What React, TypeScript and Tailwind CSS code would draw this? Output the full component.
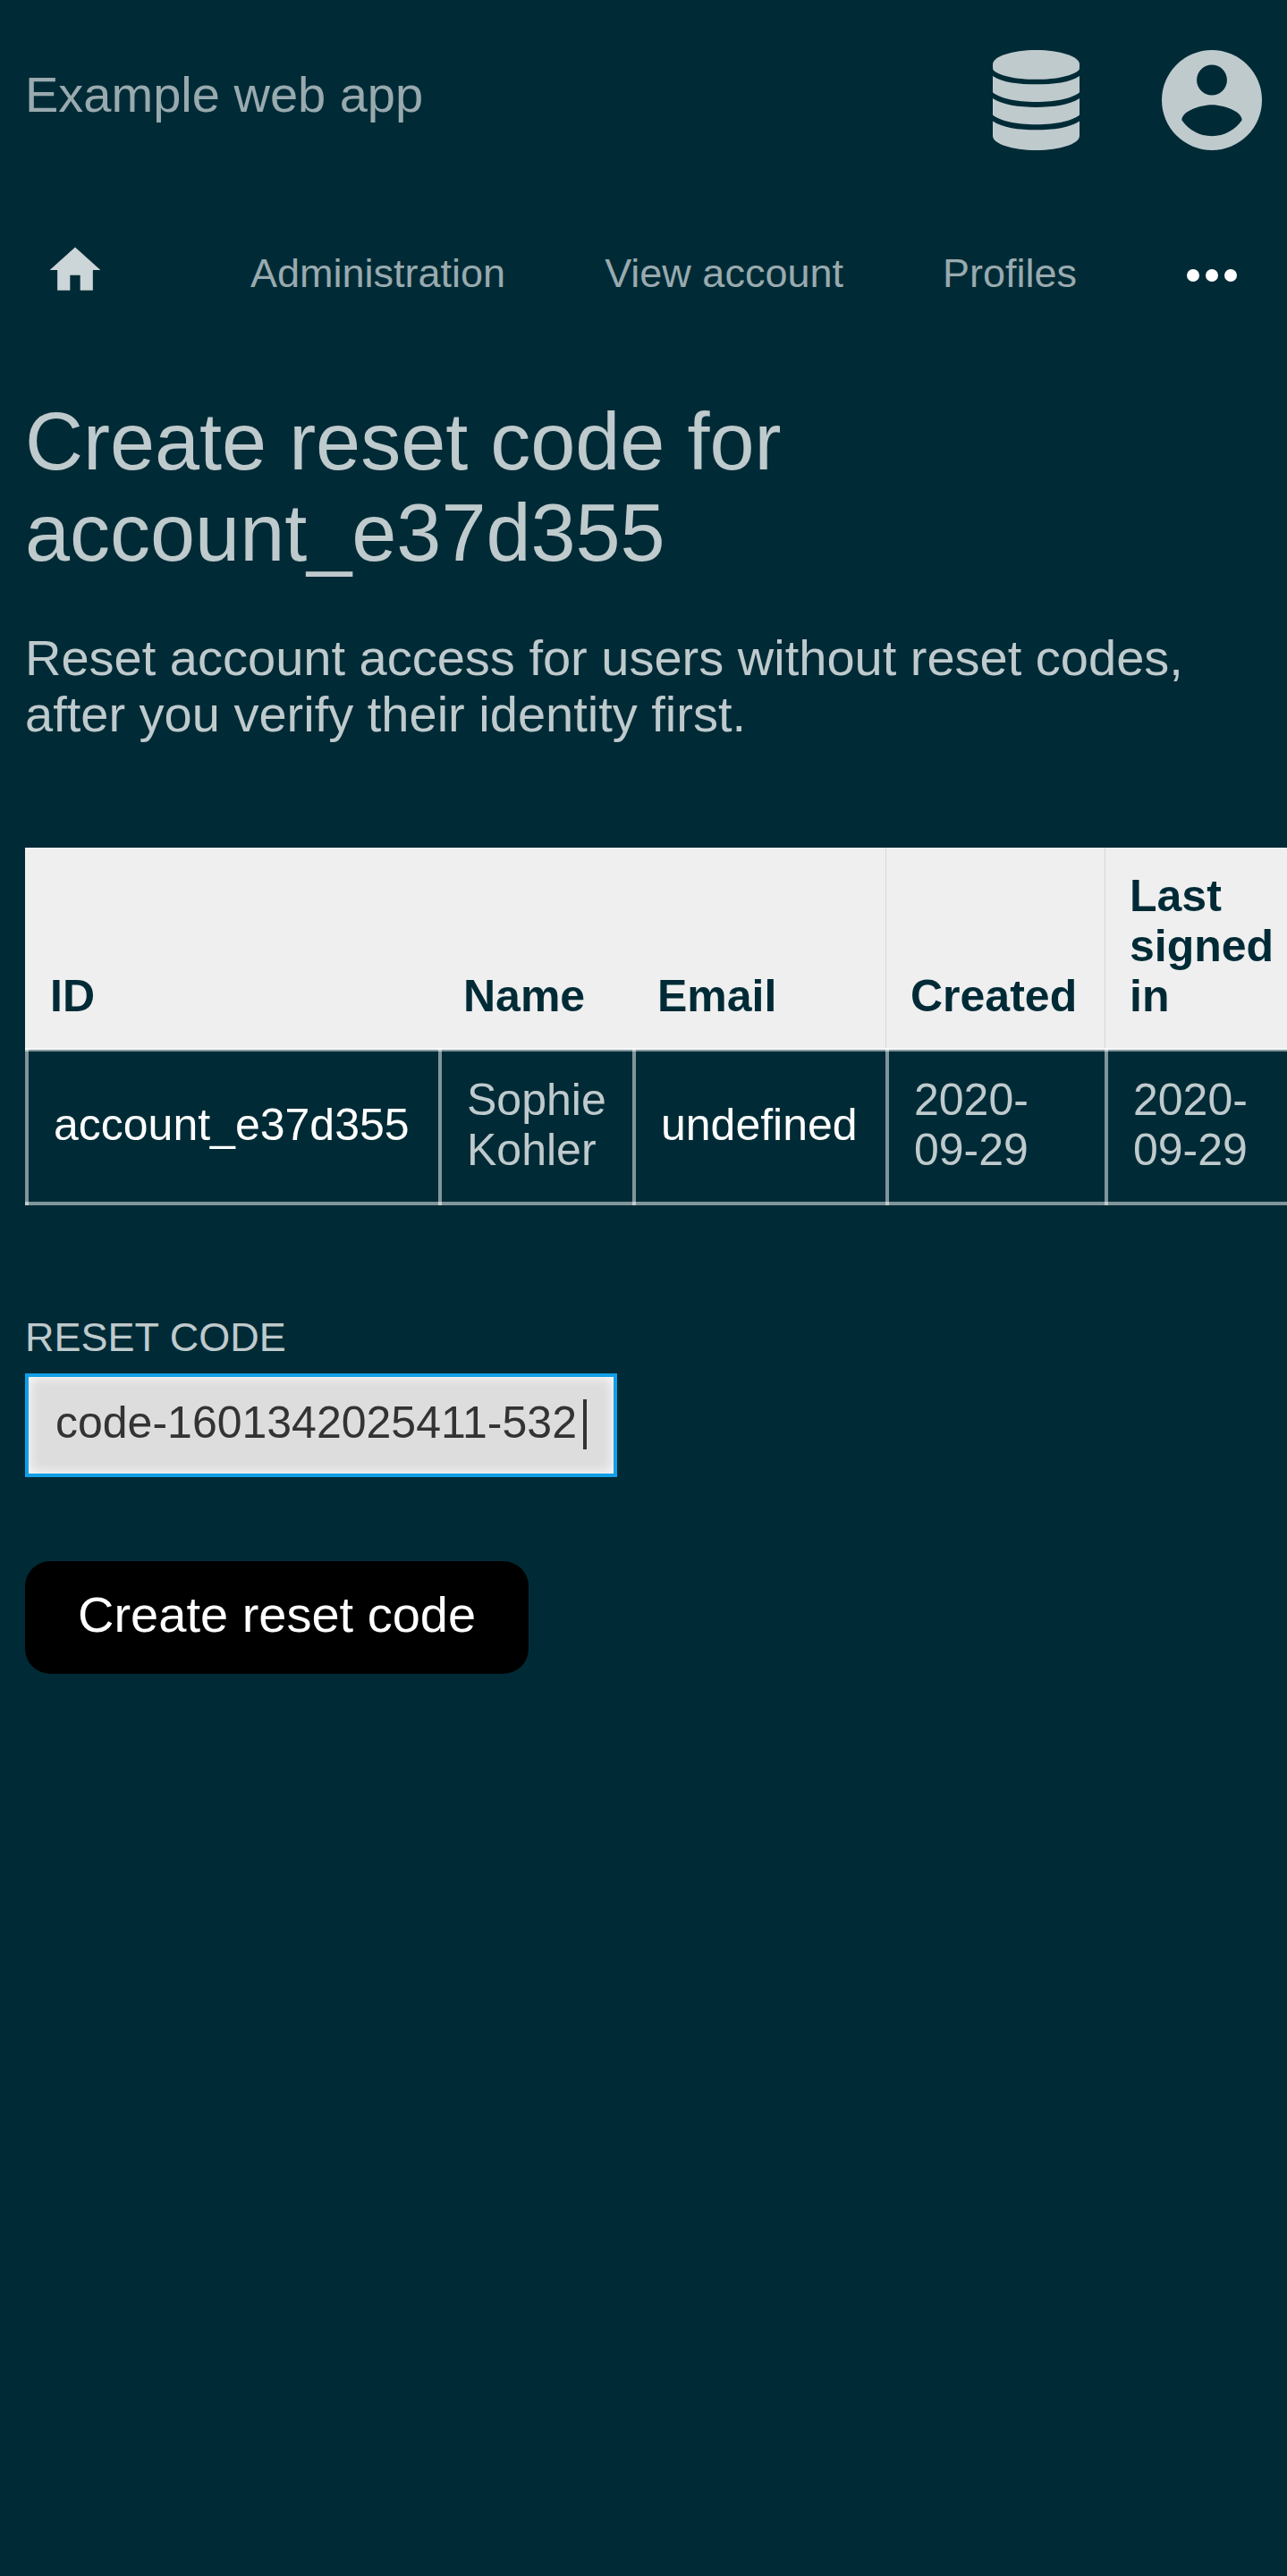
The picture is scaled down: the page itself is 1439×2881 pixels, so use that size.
const NAV_LINKS = ['Administration', 'View account', 'Profiles'];

const COLUMNS = [
  { label: 'ID', width: 'min-w-[462px] shadow-[-2px_0_0_#efefef]' },
  { label: 'Name', width: 'min-w-[217px]' },
  { label: 'Email', width: 'min-w-[283px]' },
  { label: 'Created', width: 'min-w-[245px] shadow-[-1px_0_0_#efefef,-2px_0_0_#d4d7d8]' },
  { label: 'Last signed in', width: 'min-w-[220px] shadow-[-1px_0_0_#efefef,-2px_0_0_#d4d7d8]' },
];

const CELL = 'border-[4px] border-white/50 px-[28px] pt-[26px] pb-[30px] align-middle';

function DatabaseIcon() {
  return (
    <svg viewBox="0 0 448 512" preserveAspectRatio="none" className="h-[112px] w-[97px]" fill="currentColor" aria-hidden="true">
      <path d="M448 73.143v12c0 1-1 14-1 14C421 130 330 150 224 150S24 130 1 99c0 0-1-13-1-14V73.143C0 32.571 100.286 0 224 0s224 32.571 224 73.143z" />
      <path d="M0 132c48 33 136 43 224 43s176-10 224-43v84c-32 29-120 49-224 49S32 245 0 216z" />
      <path d="M0 247c48 33 136 45 224 45s176-12 224-45v84c-32 29-120 49-224 49S32 360 0 331z" />
      <path d="M0 363c48 33 136 45 224 45s176-12 224-45v76c0 40-100 73-224 73S0 479 0 439z" />
    </svg>
  );
}

function AccountIcon() {
  return (
    <svg viewBox="0 0 496 512" className="size-[112px]" preserveAspectRatio="none" fill="currentColor" aria-hidden="true">
      <path
        fillRule="evenodd"
        d="M248 0a248 256 0 1 0 0 512a248 256 0 1 0 0-512zM248 75a75 78 0 1 1 0 156a75 78 0 1 1 0-156zM248 440c-62 0-116-32-149-82c1-49 99-78 149-78s148 29 149 78c-33 50-87 82-149 82z"
      />
    </svg>
  );
}

export default function App() {
  return (
    <div className="min-h-screen overflow-hidden bg-[#002b36] font-['Liberation_Sans',Arial,sans-serif] text-[#bfcacd]">
      <header className="flex items-start justify-between px-[28px] pt-[56px]">
        <a href="#" className="mt-[18px] text-[56px] leading-[64px] text-[#99aaaf]">
          Example web app
        </a>
        <div className="flex gap-[92px]">
          <button type="button" aria-label="Administrator menu">
            <DatabaseIcon />
          </button>
          <button type="button" aria-label="Account menu">
            <AccountIcon />
          </button>
        </div>
      </header>

      <nav className="mt-[96px] flex h-[84px] items-center justify-between pr-[56px] pl-[50px]">
        <div className="flex items-center gap-[111px]">
          <a href="#" aria-label="Home" className="mr-[51px] pb-[8px] text-[#ccd5d7]">
            <svg viewBox="0 0 24 24" className="size-[68px]" fill="currentColor" aria-hidden="true">
              <path d="M10 20v-6h4v6h5v-8h3L12 3 2 12h3v8z" />
            </svg>
          </a>
          {NAV_LINKS.map((label) => (
            <a key={label} href="#" className="text-[45px] leading-[52px] text-[#99aaaf]">
              {label}
            </a>
          ))}
        </div>
        <button type="button" aria-label="More" className="flex gap-[7px] pt-[4px]">
          <span className="size-[14px] rounded-full bg-white" />
          <span className="size-[14px] rounded-full bg-white" />
          <span className="size-[14px] rounded-full bg-white" />
        </button>
      </nav>

      <main className="px-[28px]">
        <h1 className="mt-[95px] max-w-[1200px] text-[90px] leading-[102px]">Create reset code for account_e37d355</h1>
        <p className="mt-[57px] text-[56px] leading-[63px]">
          Reset account access for users without reset codes, after you verify their identity first.
        </p>

        <table className="mt-[118px] border-collapse text-[50px] leading-[56px]">
          <thead>
            <tr>
              {COLUMNS.map(({ label, width }) => (
                <th
                  key={label}
                  scope="col"
                  className={`${width} bg-[#efefef] pt-[26px] pr-[30px] pb-[30px] pl-[26px] text-left align-bottom font-bold text-[#002b36]`}
                >
                  {label}
                </th>
              ))}
            </tr>
          </thead>
          <tbody>
            <tr>
              <td className={CELL}>
                <a href="#" className="text-white">
                  account_e37d355
                </a>
              </td>
              <td className={CELL}>Sophie Kohler</td>
              <td className={CELL}>
                <a href="#" className="text-white">
                  undefined
                </a>
              </td>
              <td className={CELL}>2020-09-29</td>
              <td className={CELL}>2020-09-29</td>
            </tr>
          </tbody>
        </table>

        <form className="mt-[122px] flex flex-col items-start" onSubmit={(e) => e.preventDefault()}>
          <label htmlFor="code" className="text-[45px] leading-[52px] uppercase">
            Reset code
          </label>
          <div className="relative mt-[14px]">
            <input
              id="code"
              type="text"
              defaultValue="code-1601342025411-532"
              className="block h-[116px] w-[662px] border-[4px] border-[#119fe8] bg-[#dddddd] px-[30px] pb-[6px] text-[50px] text-[#333333] shadow-[inset_0_0_14px_#ffffff] outline-none"
            />
            <span aria-hidden="true" className="pointer-events-none absolute top-[29px] left-[624px] h-[56px] w-[4px] bg-[#333333]" />
          </div>
          <button type="submit" className="mt-[94px] rounded-[28px] bg-black px-[59px] pt-[28px] pb-[34px] text-[56px] leading-[64px] text-white">
            Create reset code
          </button>
        </form>
      </main>
    </div>
  );
}
